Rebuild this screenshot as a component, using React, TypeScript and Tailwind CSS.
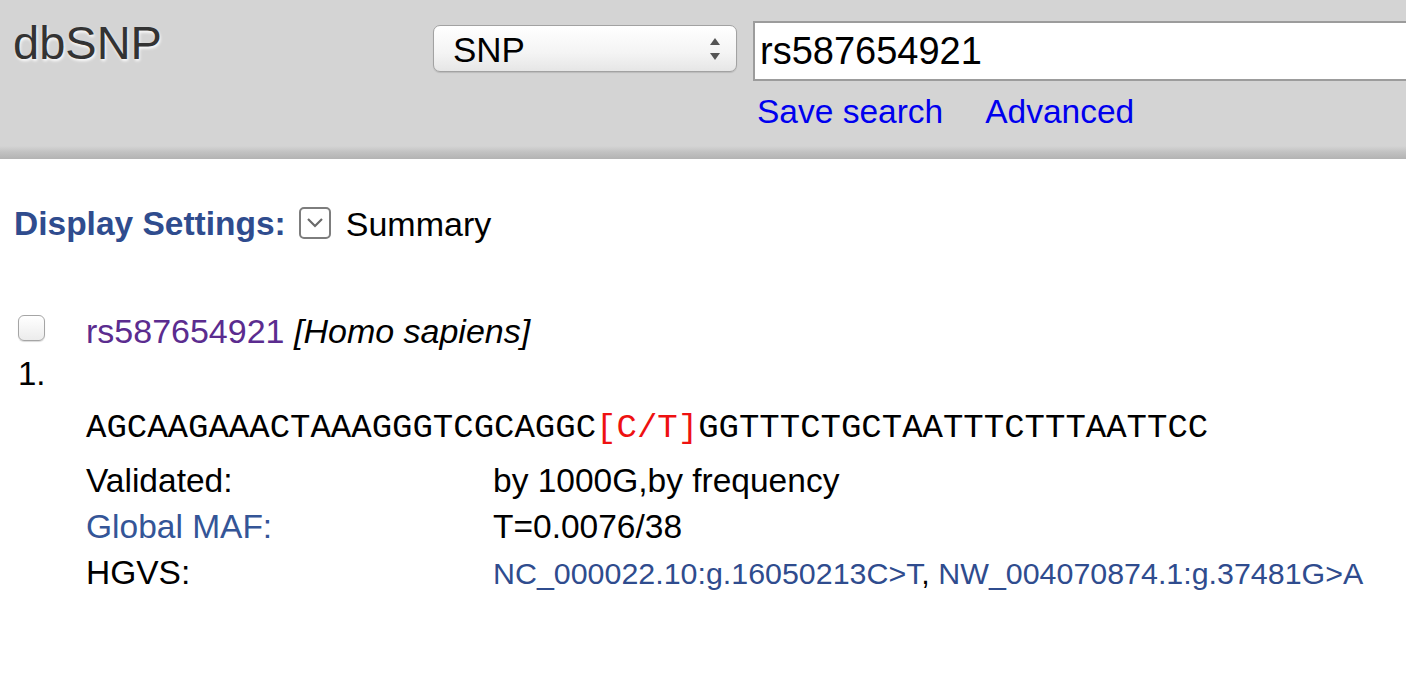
import React from "react";

const sans = "font-['Liberation_Sans',Arial,Helvetica,sans-serif]";

function UpDownArrows() {
  return (
    <svg width="12" height="24" viewBox="0 0 12 24" className="shrink-0">
      <path d="M6 1 L11 8 L1 8 Z" fill="#555" />
      <path d="M6 23 L11 16 L1 16 Z" fill="#555" />
    </svg>
  );
}

function DisplayToggle() {
  return (
    <span className="flex h-[32px] w-[32px] items-center justify-center rounded-[5px] border-2 border-[#7d7d7d] bg-white">
      <svg width="22" height="14" viewBox="0 0 22 14">
        <path d="M4 3 L11 10 L18 3" fill="none" stroke="#6a6a6a" strokeWidth="2.2" />
      </svg>
    </span>
  );
}

const rows = [
  { label: "Validated:", labelLink: false },
  { label: "Global MAF:", labelLink: true },
  { label: "HGVS:", labelLink: false },
];

export default function App() {
  return (
    <div className={`${sans} min-h-[690px] w-[1406px] overflow-hidden bg-white text-black`}>
      {/* header bar */}
      <div className="flex h-[159px] items-start bg-[linear-gradient(to_bottom,#d4d4d4_0,#d4d4d4_146px,#c2c2c2_152px,#b3b3b3_159px)]">
        <div className="w-[433px] shrink-0 pl-[13px] pt-[19px]">
          <span className="text-[47px] leading-none text-[#333] [text-shadow:1px_2px_3px_rgba(255,255,255,0.95)]">
            dbSNP
          </span>
        </div>
        <div className="flex items-start pt-[21px]">
          <div className="mt-[4px] flex h-[47px] w-[304px] shrink-0 items-center justify-between rounded-[7px] border border-[#a2a2a2] bg-[linear-gradient(to_bottom,#ffffff,#f4f4f4_60%,#e6e6e6)] pl-[19px] pr-[15px] shadow-[0_1px_1px_rgba(0,0,0,0.12)]">
            <span className="pt-[2px] text-[35px] leading-none">SNP</span>
            <UpDownArrows />
          </div>
          <div className="ml-[16px] flex flex-col">
            <div className="flex h-[60px] w-[700px] items-center border-2 border-r-0 border-[#9c9c9c] bg-white pl-[5px]">
              <span className="text-[38px] leading-none">rs587654921</span>
            </div>
            <div className="mt-[14px] flex gap-[42px] pl-[4px] text-[33.5px] leading-none text-[#0000ee]">
              <span>Save search</span>
              <span>Advanced</span>
            </div>
          </div>
        </div>
      </div>

      {/* display settings */}
      <div className="mt-[48px] flex items-start pl-[14px]">
        <span className="text-[33.5px] font-bold leading-none text-[#2f4c8e]">Display Settings:</span>
        <span className="ml-[13px]">
          <DisplayToggle />
        </span>
        <span className="ml-[15px] text-[34px] leading-none">Summary</span>
      </div>

      {/* result item */}
      <div className="mt-[73px] flex items-start">
        <div className="flex w-[86px] shrink-0 flex-col pl-[18px]">
          <span className="mt-[1px] block h-[26px] w-[27px] rounded-[6px] border-[1.5px] border-[#a5a5a5] bg-[linear-gradient(to_bottom,#ffffff,#ececec)] shadow-[0_1px_1px_rgba(0,0,0,0.15)]" />
          <span className="mt-[16px] text-[33px] leading-none">1.</span>
        </div>
        <div className="flex flex-col">
          <div className="text-[34px] leading-none">
            <span className="text-[#5b2c8f]">rs587654921</span> <i>[Homo sapiens]</i>
          </div>
          <div className="mt-[63px] font-['Liberation_Mono','Courier_New',Courier,monospace] text-[34px] leading-none">
            AGCAAGAAACTAAAGGGTCGCAGGC<span className="text-[#ee1111]">[C/T]</span>GGTTTCTGCTAATTTCTTTAATTCC
          </div>
          <div className="mt-[13px] flex flex-col text-[33.5px] leading-[46px]">
            {rows.map((r) => (
              <div key={r.label} className="flex">
                <span className={`w-[407px] shrink-0 ${r.labelLink ? "text-[#345597]" : ""}`}>{r.label}</span>
                {r.label === "Validated:" && <span>by 1000G,by frequency</span>}
                {r.label === "Global MAF:" && <span>T=0.0076/38</span>}
                {r.label === "HGVS:" && (
                  <span className="whitespace-nowrap text-[30.4px]">
                    <span className="text-[#2f4c8e]">NC_000022.10:g.16050213C&gt;T</span>,{" "}
                    <span className="text-[#2f4c8e]">NW_004070874.1:g.37481G&gt;A</span>
                  </span>
                )}
              </div>
            ))}
          </div>
        </div>
      </div>
    </div>
  );
}
